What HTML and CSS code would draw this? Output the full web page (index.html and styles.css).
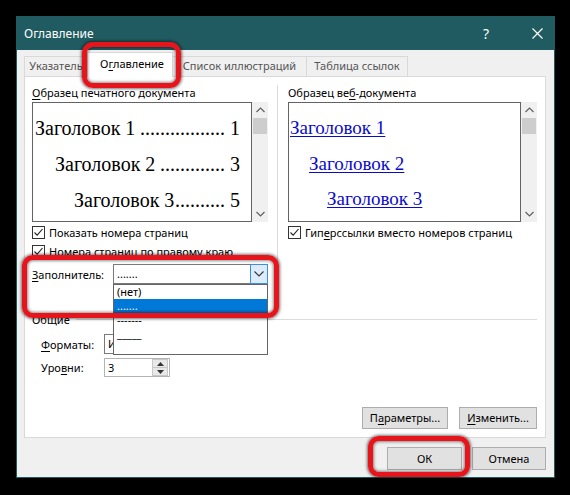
FILE: index.html
```html
<!DOCTYPE html>
<html lang="ru">
<head>
<meta charset="utf-8">
<title>Оглавление</title>
<link rel="stylesheet" href="styles.css">
</head>
<body>
<div class="dialog">
  <div class="titlebar">
    <span class="title">Оглавление</span>
    <span class="tb-btn">?</span>
    <span class="tb-btn close"><svg width="11" height="11" viewBox="0 0 11 11"><path d="M0.5 0.5L10.5 10.5M10.5 0.5L0.5 10.5" stroke="#fff" stroke-width="1.2" fill="none"/></svg></span>
  </div>
  <div class="body">
    <div class="tabs">
      <div class="tab w1">Указатель</div>
      <div class="tab active">О<u>г</u>лавление</div>
      <div class="tab w3">Список иллюстраций</div>
      <div class="tab w4">Таблица ссылок</div>
    </div>
    <div class="panel">
      <div class="previews">
        <div class="col">
          <div class="label"><u>О</u>бразец печатного документа</div>
          <div class="preview">
            <div class="pv print">
              <div class="toc"><span>Заголовок 1</span><span>................. 1</span></div>
              <div class="toc lv2"><span>Заголовок 2</span><span>............. 3</span></div>
              <div class="toc lv3"><span>Заголовок 3</span><span>.......... 5</span></div>
            </div>
            <div class="scrollbar">
              <div class="sb-btn"><svg width="9" height="6" viewBox="0 0 9 6"><path d="M0.5 5L4.5 1L8.5 5" stroke="#606060" stroke-width="1.2" fill="none"/></svg></div>
              <div class="sb-thumb"></div>
              <div class="sb-track"></div>
              <div class="sb-btn"><svg width="9" height="6" viewBox="0 0 9 6"><path d="M0.5 1L4.5 5L8.5 1" stroke="#606060" stroke-width="1.2" fill="none"/></svg></div>
            </div>
          </div>
          <div class="check first"><span class="cb"><svg width="11" height="11" viewBox="0 0 11 11"><path d="M1.5 5.5L4.2 8.2L9.5 2" stroke="#222" stroke-width="1.1" fill="none"/></svg></span><span>Показать номера страниц</span></div>
          <div class="check"><span class="cb"><svg width="11" height="11" viewBox="0 0 11 11"><path d="M1.5 5.5L4.2 8.2L9.5 2" stroke="#222" stroke-width="1.1" fill="none"/></svg></span><span>Номера страниц по правому краю</span></div>
          <div class="fill-row">
            <span class="fill-label"><u>З</u>аполнитель:</span>
            <div class="combo">
              <span class="combo-text">.......</span>
              <span class="combo-btn"><svg width="10" height="6" viewBox="0 0 10 6"><path d="M0.5 0.5L5 5L9.5 0.5" stroke="#333" stroke-width="1.1" fill="none"/></svg></span>
              <div class="droplist">
                <div class="item">(нет)</div>
                <div class="item sel">.......</div>
                <div class="item">-------</div>
                <div class="item">_____</div>
              </div>
            </div>
          </div>
        </div>
        <div class="vsep"></div>
        <div class="col">
          <div class="label">Образец ве<u>б</u>-документа</div>
          <div class="preview">
            <div class="pv web">
              <div class="link">Заголовок 1</div>
              <div class="link lv2">Заголовок 2</div>
              <div class="link lv3">Заголовок 3</div>
            </div>
            <div class="scrollbar">
              <div class="sb-btn"><svg width="9" height="6" viewBox="0 0 9 6"><path d="M0.5 5L4.5 1L8.5 5" stroke="#606060" stroke-width="1.2" fill="none"/></svg></div>
              <div class="sb-thumb"></div>
              <div class="sb-track"></div>
              <div class="sb-btn"><svg width="9" height="6" viewBox="0 0 9 6"><path d="M0.5 1L4.5 5L8.5 1" stroke="#606060" stroke-width="1.2" fill="none"/></svg></div>
            </div>
          </div>
          <div class="check first"><span class="cb"><svg width="11" height="11" viewBox="0 0 11 11"><path d="M1.5 5.5L4.2 8.2L9.5 2" stroke="#222" stroke-width="1.1" fill="none"/></svg></span><span>Гип<u>е</u>рссылки вместо номеров страниц</span></div>
        </div>
      </div>
      <div class="general">
        <div class="group-title"><span>Общие</span><span class="gline"></span></div>
        <div class="frow">
          <span class="flabel"><u>Ф</u>орматы:</span>
          <div class="select">Из шаблона</div>
        </div>
        <div class="frow lv">
          <span class="flabel">Уро<u>в</u>ни:</span>
          <div class="spin">
            <span class="spin-val">3</span>
            <span class="spin-btns">
              <span class="sp"><svg width="7" height="4" viewBox="0 0 7 4"><path d="M0 4L3.5 0L7 4Z" fill="#333"/></svg></span>
              <span class="sp"><svg width="7" height="4" viewBox="0 0 7 4"><path d="M0 0L3.5 4L7 0Z" fill="#333"/></svg></span>
            </span>
          </div>
        </div>
      </div>
      <div class="panel-buttons">
        <button class="btn b-params">П<u>а</u>раметры...</button>
        <button class="btn b-edit"><u>И</u>зменить...</button>
      </div>
    </div>
    <div class="footer">
      <button class="btn b-ok">ОК</button>
      <button class="btn b-cancel">Отмена</button>
    </div>
  </div>
  <div class="mark m-tab"></div>
  <div class="mark m-fill"></div>
  <div class="mark m-ok"></div>
</div>
</body>
</html>
```
FILE: styles.css
```css
* { box-sizing: border-box; }
html, body { margin: 0; }
body {
  background: #000;
  width: 570px;
  height: 495px;
  overflow: hidden;
  padding: 16px 0 0 16px;
  font-family: "Noto Sans", "DejaVu Sans", sans-serif;
  font-size: 11px;
  color: #000;
}
u { text-decoration: underline; text-underline-offset: 2px; }

.dialog {
  position: relative;
  width: 539px;
  height: 462px;
  background: #f0f0f0;
  border: 1px solid #1f5b60;
  display: flex;
  flex-direction: column;
}
.titlebar {
  flex: none;
  height: 33px;
  background: #1f5b60;
  color: #fff;
  display: flex;
  align-items: center;
  padding-left: 7px;
  font-size: 12px;
}
.title { flex: 1; }
.tb-btn {
  width: 34px;
  height: 33px;
  display: flex;
  align-items: center;
  justify-content: center;
  font-size: 14px;
}
.tb-btn.close { margin-left: 17px; }

.body {
  flex: 1;
  display: flex;
  flex-direction: column;
  padding: 0 8px 0 7px;
}
.tabs {
  position: relative;
  z-index: 1;
  display: flex;
  align-items: flex-start;
  height: 20px;
  margin-top: 6px;
}
.tab {
  height: 20px;
  line-height: 18px;
  border: 1px solid #d9d9d9;
  border-bottom: none;
  background: #f0f0f0;
  color: #555;
  text-align: center;
  white-space: nowrap;
  margin-right: -1px;
}
.tab.w1 { width: 64px; }
.tab.w3 { width: 135px; }
.tab.w4 { width: 102px; }
.tab.active {
  width: 86px;
  height: 25px;
  margin-top: -4px;
  line-height: 22px;
  padding-left: 4px;
  background: #fff;
  color: #000;
  position: relative;
  z-index: 2;
}

.panel {
  width: 522px;
  height: 362px;
  background: #fff;
  border: 1px solid #d9d9d9;
  padding: 8px 8px 8px 7px;
  display: flex;
  flex-direction: column;
}
.previews {
  display: grid;
  grid-template-columns: 236px 20px 249px;
  height: 227px;
}
.vsep { width: 1px; background: #dcdcdc; margin-left: 9px; }
.label { height: 15px; line-height: 15px; white-space: nowrap; }
.preview { display: flex; margin-top: 2px; height: 120px; }
.pv {
  height: 120px;
  border: 1px solid #646464;
  background: #fff;
  overflow: hidden;
  font-family: "Liberation Serif", "Times New Roman", serif;
}
.pv.print { width: 220px; padding: 7px 11px 0 2px; font-size: 20px; line-height: 36px; }
.pv.web { width: 233px; padding: 7px 4px 0 1px; font-size: 19px; line-height: 35.5px; }
.toc { display: flex; justify-content: space-between; white-space: nowrap; }
.toc.lv2 { padding-left: 20px; }
.toc.lv3 { padding-left: 39px; }
.link { color: #0a0acd; text-decoration: underline; text-underline-offset: 2px; text-decoration-thickness: 1px; white-space: nowrap; }
.link.lv2 { padding-left: 19px; }
.link.lv3 { padding-left: 37px; }

.scrollbar {
  width: 16px;
  height: 120px;
  background: #f0f0f0;
  display: flex;
  flex-direction: column;
}
.sb-btn { height: 16px; display: flex; align-items: center; justify-content: center; }
.sb-thumb { height: 16px; margin: 0 1px; background: #cdcdcd; }
.sb-track { flex: 1; }

.check { display: flex; align-items: center; height: 19px; gap: 4px; white-space: nowrap; }
.check.first { margin-top: 1px; }
.cb {
  width: 13px;
  height: 13px;
  border: 1px solid #333;
  background: #fff;
  display: flex;
  align-items: center;
  justify-content: center;
}

.fill-row { display: flex; align-items: center; margin-top: 3px; height: 20px; }
.fill-label { width: 81px; }
.combo {
  position: relative;
  width: 155px;
  height: 20px;
  border: 1px solid #7a7a7a;
  background: #fff;
  display: flex;
  align-items: center;
}
.combo-text { flex: 1; padding-left: 3px; line-height: 16px; }
.combo-btn {
  width: 18px;
  height: 20px;
  margin: -1px -1px -1px 0;
  border: 1px solid #3c8ee0;
  background: #dcecfc;
  display: flex;
  align-items: center;
  justify-content: center;
}
.droplist {
  position: absolute;
  z-index: 5;
  top: 19px;
  left: -1px;
  width: 155px;
  height: 71px;
  border: 1px solid #646464;
  background: #fff;
}
.item { height: 14px; line-height: 14px; padding-left: 3px; }
.item.sel { background: #0078d7; color: #fff; }

.general { display: flex; flex-direction: column; }
.group-title { display: flex; height: 16px; align-items: flex-start; line-height: 16px; }
.gline { flex: 1; height: 1px; background: #dcdcdc; margin: 7px 0 0 6px; }
.frow { display: flex; align-items: center; height: 20px; margin-top: 6px; padding-left: 9px; }
.frow.lv { height: 19px; margin-top: 4px; }
.flabel { width: 63px; }
.select {
  width: 164px;
  height: 20px;
  border: 1px solid #7a7a7a;
  padding-left: 3px;
  line-height: 18px;
  background: #fff;
}
.spin {
  width: 66px;
  height: 19px;
  border: 1px solid #b4b4b4;
  background: #fff;
  display: flex;
  align-items: center;
}
.spin-val { flex: 1; padding-left: 3px; }
.spin-btns { width: 16px; height: 17px; margin-right: 1px; display: flex; flex-direction: column; }
.sp {
  flex: 1;
  background: #e8e8e8;
  border: 1px solid #c8c8c8;
  display: flex;
  align-items: center;
  justify-content: center;
}
.sp + .sp { border-top: none; }

.panel-buttons { margin-top: auto; display: flex; justify-content: flex-end; gap: 11px; }
.btn {
  height: 22px;
  border: 1px solid #adadad;
  background: #e1e1e1;
  font-family: "Noto Sans", "DejaVu Sans", sans-serif;
  font-size: 11px;
  color: #000;
  padding: 0;
  line-height: 18px;
}
.b-params { width: 86px; }
.b-edit { width: 78px; }
.footer { display: flex; justify-content: flex-end; gap: 10px; margin-top: 9px; }
.b-ok { width: 75px; height: 23px; }
.b-cancel { width: 74px; height: 23px; }

.mark {
  position: absolute;
  z-index: 10;
  border: 5px solid #e8141c;
  border-radius: 11px;
  box-shadow: 0 0 3px 1px rgba(0,0,0,0.55), inset 0 0 3px 1px rgba(0,0,0,0.45);
  pointer-events: none;
}
.m-tab { left: 65px; top: 25px; width: 99px; height: 46px; }
.m-fill { left: 5px; top: 238px; width: 257px; height: 63px; }
.m-ok { left: 351px; top: 419px; width: 102px; height: 41px; }
```
